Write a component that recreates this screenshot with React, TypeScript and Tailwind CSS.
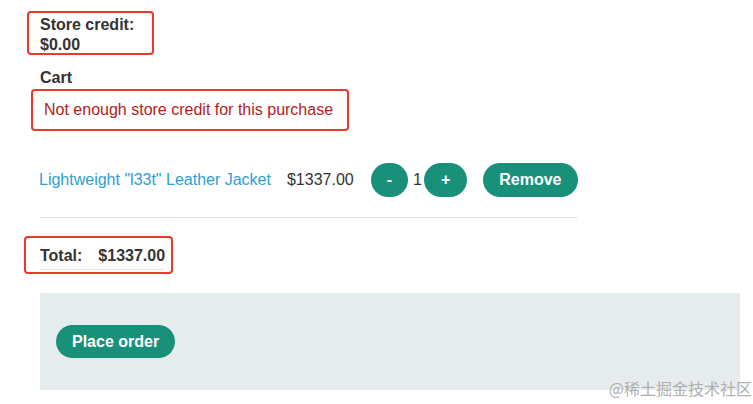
import { Fragment } from 'react'

const TEAL = 'bg-[#19907a]'

function PillButton({ label, wide }: { label: string; wide?: boolean }) {
  return (
    <button
      className={`${TEAL} h-[34px] rounded-[17px] ${wide ? 'px-[17px]' : 'px-4'} text-[16px] font-bold text-white leading-none`}
    >
      {label}
    </button>
  )
}

export default function App() {
  return (
    <div className="relative h-[404px] w-[753px] overflow-hidden bg-white font-['Liberation_Sans',Arial,sans-serif] text-[16px] leading-[20px] text-[#333]">
      <div className="pl-[40px] pt-[15px]">
        {/* Store credit */}
        <div className="font-bold">
          <p>Store credit:</p>
          <p>$0.00</p>
        </div>

        {/* Cart */}
        <h2 className="mt-[13px] font-bold">Cart</h2>
        <p className="ml-[4px] mt-[12px] text-[#b3211b]">
          Not enough store credit for this purchase
        </p>

        {/* Line item */}
        <div className="ml-[-1px] mt-[43px] flex h-[34px] items-center">
          <a href="#" className="text-[#2b9fd3]">
            Lightweight "l33t" Leather Jacket
          </a>
          <span className="ml-[16px]">$1337.00</span>
          <div className="ml-[17px] flex items-center">
            <PillButton label="-" />
            <span className="ml-[5px] mr-[2px]">1</span>
            <PillButton label="+" wide />
          </div>
          <div className="ml-[16px]">
            <PillButton label="Remove" />
          </div>
        </div>

        <div className="mt-[20px] h-px w-[537px] bg-[#dedede]" />

        {/* Total */}
        <div className="mt-[28px] inline-flex border-b border-[#e3e3e3] pb-[3px] font-bold">
          {[['Total:', ''], ['$1337.00', 'ml-[16px]']].map(([t, c]) => (
            <Fragment key={t}>
              <span className={c}>{t}</span>
            </Fragment>
          ))}
        </div>

        {/* Checkout */}
        <div className="mt-[23px] flex h-[97px] w-[700px] items-center bg-[#e6ecee] pl-[16px]">
          <button className={`${TEAL} h-[33px] rounded-[17px] px-4 text-[16px] font-bold text-white`}>
            Place order
          </button>
        </div>
      </div>

      {/* annotation boxes */}
      <div className="absolute left-[27px] top-[11px] h-[44px] w-[127px] rounded-[4px] border-[2.5px] border-[#e8392b]" />
      <div className="absolute left-[31px] top-[89px] h-[42px] w-[318px] rounded-[4px] border-[2.5px] border-[#e8392b]" />
      <div className="absolute left-[24px] top-[236px] h-[38px] w-[149px] rounded-[4px] border-[2.5px] border-[#e8392b]" />

      {/* watermark */}
      <span className="absolute right-[1px] top-[377px] font-['Noto_Sans_CJK_SC',sans-serif] text-[16px] leading-[22px] text-[#b0b0b0]">
        @稀土掘金技术社区
      </span>
    </div>
  )
}
